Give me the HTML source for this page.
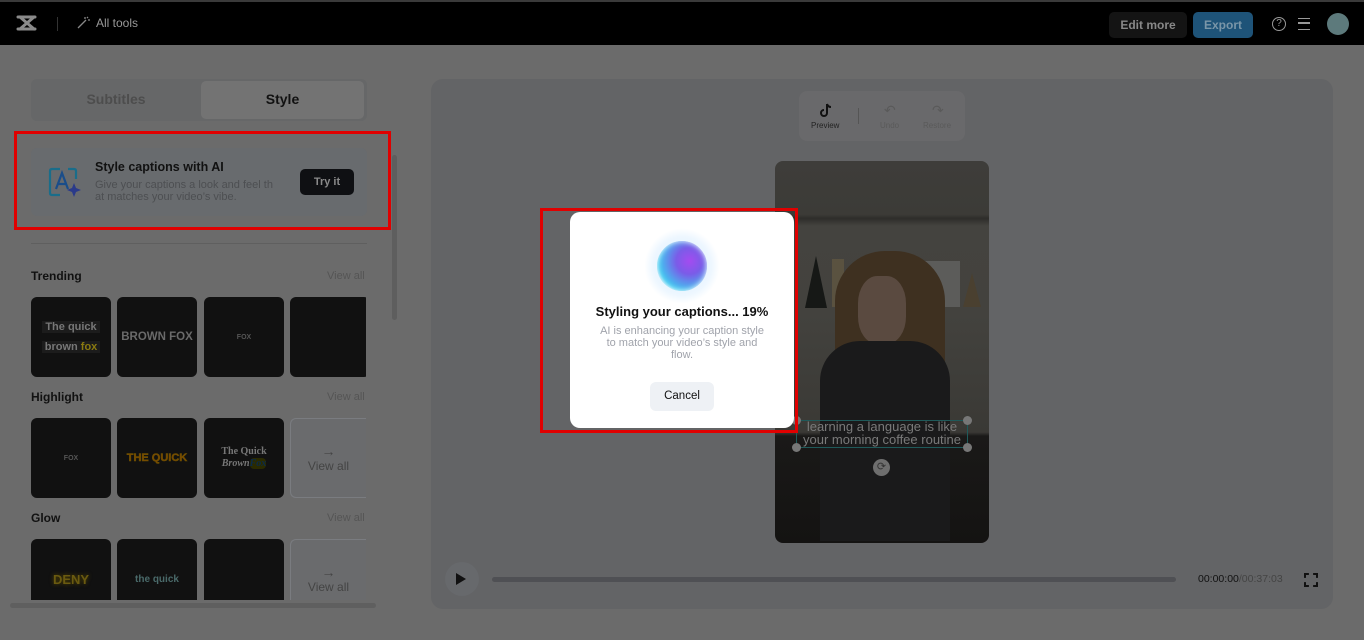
<!DOCTYPE html>
<html><head><meta charset="utf-8"><style>
*{box-sizing:border-box;margin:0;padding:0}
body{width:1364px;height:640px;overflow:hidden;background:#6b6b6b;font-family:"Liberation Sans",sans-serif;position:relative}
.abs{position:absolute}
.hdr{left:0;top:0;width:1364px;height:45px;background:#000;border-top:2px solid #3a3a3a}
.tile{position:absolute;width:80px;height:80px;background:#111;border-radius:6px;display:flex;align-items:center;justify-content:center;text-align:center;font-weight:bold}
.lbl{position:absolute;left:31px;font-size:12px;font-weight:bold;color:#111}
.va{position:absolute;left:327px;font-size:11px;color:#555}
.vall{background:#6a6b6d;border:1px solid #7a7c80;color:#444;font-weight:normal;font-size:12px;flex-direction:column;width:76px;border-right:none;border-radius:6px 0 0 6px}
</style></head><body>
<div class="abs hdr">
  <svg class="abs" style="left:16px;top:12px" width="22" height="18" viewBox="0 0 22 18"><path d="M2 3 L19 3 M2 15 L19 15 M4 3 Q11 9 18 15 M18 3 Q11 9 4 15" stroke="#8a8a8a" stroke-width="3" fill="none" stroke-linecap="round"/></svg>
  <div class="abs" style="left:57px;top:15px;width:1px;height:14px;background:#333"></div>
  <svg class="abs" style="left:76px;top:14px" width="14" height="14" viewBox="0 0 14 14"><path d="M2 12 L10 4 M9 1 L9 3 M12 4 L14 4 M12 1 L11 2" stroke="#888" stroke-width="1.3" fill="none"/></svg>
  <div class="abs" style="left:96px;top:14px;font-size:12px;color:#999">All tools</div>
  <div class="abs" style="left:1109px;top:10px;width:78px;height:26px;background:#141414;border-radius:5px;color:#888;font-size:12px;font-weight:bold;text-align:center;line-height:26px">Edit more</div>
  <div class="abs" style="left:1193px;top:10px;width:60px;height:26px;background:#1e5378;border-radius:5px;color:#7a96a8;font-size:12px;font-weight:bold;text-align:center;line-height:26px">Export</div>
  <div class="abs" style="left:1272px;top:15px;width:14px;height:14px;border:1.5px solid #999;border-radius:50%;color:#999;font-size:10px;text-align:center;line-height:11px">?</div>
  <div class="abs" style="left:1298px;top:16px;width:12px;height:12px;border-top:1.5px solid #999;border-bottom:1.5px solid #999"><div style="margin-top:3px;height:1.5px;background:#999"></div></div>
  <div class="abs" style="left:1327px;top:11px;width:22px;height:22px;border-radius:50%;background:#5d7a7c"></div>
</div>
<div class="abs" style="left:31px;top:79px;width:336px;height:42px;background:#666768;border-radius:6px"></div>
<div class="abs" style="left:201px;top:81px;width:163px;height:38px;background:#737373;border-radius:5px"></div>
<div class="abs" style="left:31px;top:91px;width:170px;text-align:center;font-size:14px;font-weight:bold;color:#4d4d4d">Subtitles</div>
<div class="abs" style="left:201px;top:91px;width:163px;text-align:center;font-size:14px;font-weight:bold;color:#111">Style</div>
<div class="abs" style="left:31px;top:148px;width:336px;height:68px;background:#686b6e;border-radius:6px"></div>
<svg class="abs" style="left:48px;top:167px" width="34" height="32" viewBox="0 0 34 32"><path d="M12 2 H4 Q2 2 2 4 V26 Q2 28 4 28 H12 M20 2 H26 Q28 2 28 4 V12" stroke="#1a6d8a" stroke-width="2.2" fill="none"/><path d="M8 22 L14 6 L20 22 M10 17 H18" stroke="#1a4d8a" stroke-width="2.2" fill="none"/><path d="M26 16 L28 21 L33 23 L28 25 L26 30 L24 25 L19 23 L24 21Z" fill="#2a3a8a"/></svg>
<div class="abs" style="left:95px;top:160px;font-size:12.5px;font-weight:bold;color:#111">Style captions with AI</div>
<div class="abs" style="left:95px;top:179px;font-size:11px;line-height:12px;color:#4d4f52;width:195px">Give your captions a look and feel th<br>at matches your video’s vibe.</div>
<div class="abs" style="left:300px;top:169px;width:54px;height:26px;background:#0f1013;border-radius:5px;color:#8a8a8a;font-size:11px;font-weight:bold;text-align:center;line-height:26px">Try it</div>
<div class="abs" style="left:14px;top:131px;width:377px;height:99px;border:3px solid #e00000"></div>
<div class="abs" style="left:392px;top:155px;width:5px;height:165px;background:#5e5e5e;border-radius:3px"></div>
<div class="abs" style="left:31px;top:243px;width:336px;height:1px;background:#5f5f5f"></div>
<div class="lbl" style="top:269px">Trending</div><div class="va" style="top:270px">View all</div>
<div class="lbl" style="top:390px">Highlight</div><div class="va" style="top:391px">View all</div>
<div class="lbl" style="top:511px">Glow</div><div class="va" style="top:512px">View all</div>
<div class="abs" style="left:0;top:297px;width:366px;height:303px;overflow:hidden">
 <div class="tile" style="left:31px;top:0;font-size:11px;line-height:20px;color:#777"><div><span style="background:#1c1c1c;padding:0 3px">The quick</span><br><span style="background:#1c1c1c;padding:0 3px">brown <span style="color:#8a7a10">fox</span></span></div></div>
 <div class="tile" style="left:117px;top:0;font-size:11.5px;color:#6a6a6a">BROWN FOX</div>
 <div class="tile" style="left:204px;top:0;font-size:7px;color:#555">FOX</div>
 <div class="tile" style="left:290px;top:0"></div>
 <div class="tile" style="left:31px;top:121px;font-size:7px;color:#555">FOX</div>
 <div class="tile" style="left:117px;top:121px;font-size:11px;color:#7a4a00;-webkit-text-stroke:0.5px #6a5000">THE QUICK</div>
 <div class="tile" style="left:204px;top:121px;font-size:10px;line-height:12px;color:#777;font-family:'Liberation Serif',serif"><div style="width:80px">The Quick<br><i>Brown<span style="background:#2a2a00;color:#0a2a4a;border-radius:4px">Fox</span></i></div></div>
 <div class="tile vall" style="left:290px;top:121px"><div style="font-size:14px">→</div>View all</div>
 <div class="tile" style="left:31px;top:242px;font-size:13px;color:#6a5a10;text-shadow:0 0 4px #5a4a00">DENY</div>
 <div class="tile" style="left:117px;top:242px;font-size:10px;color:#4a6a6a">the quick</div>
 <div class="tile" style="left:204px;top:242px"></div>
 <div class="tile vall" style="left:290px;top:242px"><div style="font-size:14px">→</div>View all</div>
</div>
<div class="abs" style="left:10px;top:603px;width:366px;height:5px;background:#5f5f5f;border-radius:3px"></div>
<div class="abs" style="left:431px;top:79px;width:902px;height:530px;background:#636466;border-radius:12px"></div>
<div class="abs" style="left:799px;top:91px;width:166px;height:50px;background:#69696b;border-radius:8px"></div>
<svg class="abs" style="left:819px;top:103px" width="14" height="15" viewBox="0 0 14 15"><path d="M8 1 V10 A3 3 0 1 1 5 7 M8 1 Q9 4 12 4" stroke="#111" stroke-width="2" fill="none"/></svg>
<div class="abs" style="left:811px;top:121px;font-size:8px;color:#222">Preview</div>
<div class="abs" style="left:858px;top:108px;width:1px;height:16px;background:#555"></div>
<div class="abs" style="left:884px;top:102px;font-size:14px;color:#5a5a5a">↶</div>
<div class="abs" style="left:880px;top:121px;font-size:8px;color:#5a5a5a">Undo</div>
<div class="abs" style="left:932px;top:102px;font-size:14px;color:#5a5a5a">↷</div>
<div class="abs" style="left:923px;top:121px;font-size:8px;color:#5a5a5a">Restore</div>
<div class="abs" style="left:775px;top:161px;width:214px;height:382px;border-radius:8px;overflow:hidden;background:linear-gradient(#3e3d3a 0,#3c3b37 14%,#2e2d2a 15%,#44433f 17%,#43423e 40%,#3a3935 71%,#1a1918 72%,#141312 100%)">
 <div class="abs" style="left:30px;top:95px;width:22px;height:52px;background:#161816;clip-path:polygon(50% 0,100% 100%,0 100%)"></div>
 <div class="abs" style="left:57px;top:98px;width:12px;height:48px;background:#5a5240"></div>
 <div class="abs" style="left:140px;top:100px;width:45px;height:46px;background:#5c5c5a"></div>
 <div class="abs" style="left:188px;top:112px;width:18px;height:34px;background:#4a4030;clip-path:polygon(50% 0,100% 100%,0 100%)"></div>
 <div class="abs" style="left:60px;top:90px;width:110px;height:200px;background:#3e3020;border-radius:50px 50px 20px 20px"></div>
 <div class="abs" style="left:83px;top:115px;width:48px;height:68px;background:#5a4a40;border-radius:40%"></div>
 <div class="abs" style="left:45px;top:180px;width:130px;height:200px;background:#1a1a1b;border-radius:40px 40px 0 0"></div>
</div>
<div class="abs" style="left:796px;top:420px;width:172px;height:28px;border:1px solid #1f5a5a"></div>
<div class="abs" style="left:792px;top:416px;width:9px;height:9px;border-radius:50%;background:#777"></div>
<div class="abs" style="left:963px;top:416px;width:9px;height:9px;border-radius:50%;background:#777"></div>
<div class="abs" style="left:792px;top:443px;width:9px;height:9px;border-radius:50%;background:#777"></div>
<div class="abs" style="left:963px;top:443px;width:9px;height:9px;border-radius:50%;background:#777"></div>
<div class="abs" style="left:793px;top:420px;width:178px;text-align:center;font-size:13px;line-height:13px;color:#7a7a7a">learning a language is like<br>your morning coffee routine</div>
<div class="abs" style="left:873px;top:459px;width:17px;height:17px;border-radius:50%;background:#6e6e6e;color:#333;font-size:11px;text-align:center;line-height:17px">⟳</div>
<div class="abs" style="left:445px;top:562px;width:34px;height:34px;border-radius:50%;background:#67696c"></div>
<div class="abs" style="left:456px;top:573px;width:0;height:0;border-left:10px solid #111;border-top:6px solid transparent;border-bottom:6px solid transparent"></div>
<div class="abs" style="left:492px;top:577px;width:684px;height:5px;background:#4f5054;border-radius:3px"></div>
<div class="abs" style="left:1198px;top:573px;font-size:10.5px;color:#111">00:00:00<span style="color:#444">/00:37:03</span></div>
<div class="abs" style="left:1304px;top:573px;width:14px;height:14px;border:2px solid #111;clip-path:polygon(0 0,35% 0,35% 100%,0 100%,0 0,100% 0,100% 35%,0 35%,0 65%,100% 65%,100% 100%,65% 100%,65% 0,100% 0)"></div>
<div class="abs" style="left:570px;top:212px;width:224px;height:216px;background:#fff;border-radius:10px"></div>
<div class="abs" style="left:644px;top:228px;width:76px;height:76px;border-radius:50%;background:radial-gradient(circle,#d2ecff 0,#eef7ff 55%,#fff 70%)"></div>
<div class="abs" style="left:657px;top:241px;width:50px;height:50px;border-radius:50%;background:radial-gradient(circle at 65% 40%,#a44bf0 0,#7a5ce8 30%,#3fc8f0 70%,#e8f6ff 95%);box-shadow:0 0 6px #fff inset"></div>
<div class="abs" style="left:570px;top:304px;width:224px;text-align:center;font-size:13px;font-weight:bold;color:#111">Styling your captions... 19%</div>
<div class="abs" style="left:570px;top:325px;width:224px;text-align:center;font-size:11px;line-height:12px;color:#a0a3ab">AI is enhancing your caption style<br>to match your video’s style and<br>flow.</div>
<div class="abs" style="left:650px;top:382px;width:64px;height:29px;background:#eef1f5;border-radius:6px;font-size:11.5px;color:#111;text-align:center;line-height:29px">Cancel</div>
<div class="abs" style="left:540px;top:208px;width:258px;height:225px;border:3px solid #e00000"></div>
</body></html>
